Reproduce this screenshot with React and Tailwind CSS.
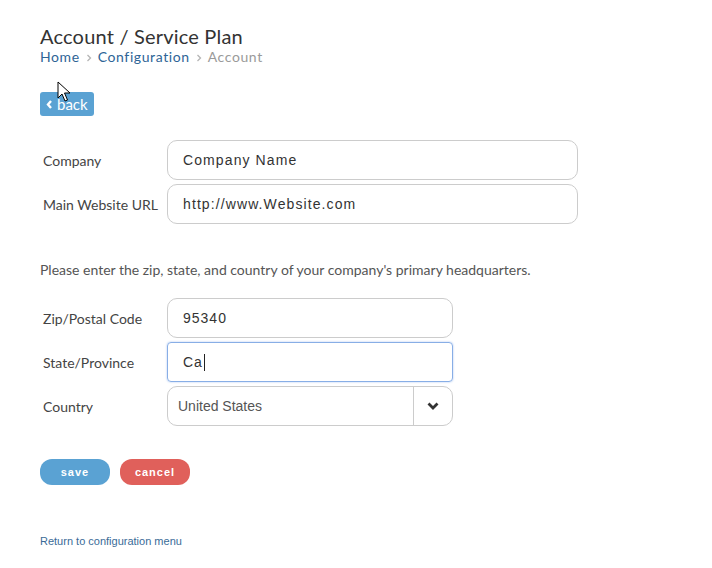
import React from "react";

const lato = { fontFamily: "Lato, 'Open Sans', sans-serif" };
const arial = { fontFamily: "'Liberation Sans', Arial, sans-serif" };

function Chevron() {
  return (
    <svg width="6" height="8" viewBox="0 0 6 8" className="mx-[6px] mt-[2px]">
      <path d="M1.5 1 L4.5 4 L1.5 7" fill="none" stroke="#b5b5b5" strokeWidth="1.3" />
    </svg>
  );
}

function Row({ label, children }) {
  return (
    <div className="flex items-center">
      <div className="w-[127px] pl-[3px] text-[14px] text-[#444]">{label}</div>
      {children}
    </div>
  );
}

export default function App() {
  return (
    <div className="relative min-h-screen bg-white px-[40px] pt-[24px]" style={lato}>
      {/* mouse pointer */}
      <svg className="absolute left-[57px] top-[81px]" width="14" height="22" viewBox="0 0 14 22">
        <path d="M1 1 L1 17 L5 13 L8 20 L10.5 19 L7.5 12 L13 12 Z" fill="#fff" stroke="#000" strokeWidth="1" strokeLinejoin="round" />
      </svg>

      <h1 className="text-[20px] leading-[24px] tracking-[0.2px] text-[#333]">Account / Service Plan</h1>
      <div className="flex items-center text-[14px] leading-[18px] tracking-[0.6px]">
        <span className="text-[#2e6496]">Home</span>
        <Chevron />
        <span className="text-[#2e6496]">Configuration</span>
        <Chevron />
        <span className="text-[#9a9a9a]">Account</span>
      </div>

      <button className="mt-[26px] flex h-[24px] w-[54px] items-center gap-[4px] rounded-[3px] bg-[#5aa2d3] pl-[6px] text-[15px] text-white">
        <svg width="7" height="9" viewBox="0 0 7 9">
          <path d="M5 1 L2 4.5 L5 8" fill="none" stroke="#fff" strokeWidth="2.4" />
        </svg>
        back
      </button>

      <div className="mt-[24px] flex flex-col gap-[4px]">
        <Row label="Company">
          <div className="flex h-[40px] w-[411px] items-center rounded-[10px] border border-[#ccc] px-[15px] text-[14px] tracking-[1.1px] text-[#333]" style={arial}>
            Company Name
          </div>
        </Row>
        <Row label="Main Website URL">
          <div className="flex h-[40px] w-[411px] items-center rounded-[10px] border border-[#ccc] px-[15px] text-[14px] tracking-[1.1px] text-[#333]" style={arial}>
            http://www.Website.com
          </div>
        </Row>
      </div>

      <p className="mt-[36px] text-[14px] leading-[20px] text-[#555]">
        Please enter the zip, state, and country of your company's primary headquarters.
      </p>

      <div className="mt-[18px] flex flex-col gap-[4px]">
        <Row label="Zip/Postal Code">
          <div className="flex h-[40px] w-[286px] items-center rounded-[10px] border border-[#ccc] px-[15px] text-[14px] tracking-[1px] text-[#333]" style={arial}>
            95340
          </div>
        </Row>
        <Row label="State/Province">
          <div className="flex h-[40px] w-[286px] items-center rounded-[4px] border border-[#88aee6] px-[15px] text-[14px] tracking-[1px] text-[#333] shadow-[0_0_2px_rgba(102,150,230,0.6)]" style={arial}>
            Ca<span className="ml-[1px] inline-block h-[17px] w-px bg-[#222]" />
          </div>
        </Row>
        <Row label="Country">
          <div className="flex h-[40px] w-[286px] items-center rounded-[10px] border border-[#ccc] text-[14px] text-[#555]" style={arial}>
            <div className="flex-1 pl-[10px]">United States</div>
            <div className="flex h-full w-[39px] items-center justify-center border-l border-[#ccc]">
              <svg width="12" height="8" viewBox="0 0 12 8">
                <path d="M1.5 1.5 L6 6 L10.5 1.5" fill="none" stroke="#333" strokeWidth="2.8" />
              </svg>
            </div>
          </div>
        </Row>
      </div>

      <div className="mt-[33px] flex gap-[10px]" style={arial}>
        <button className="h-[26px] w-[70px] rounded-[12px] bg-[#5aa2d3] text-[11px] font-bold tracking-[1px] text-white">save</button>
        <button className="h-[26px] w-[70px] rounded-[12px] bg-[#e0605b] text-[11px] font-bold tracking-[1px] text-white">cancel</button>
      </div>

      <div className="mt-[48px] text-[11px] text-[#3a6b98]" style={arial}>
        Return to configuration menu
      </div>
    </div>
  );
}
